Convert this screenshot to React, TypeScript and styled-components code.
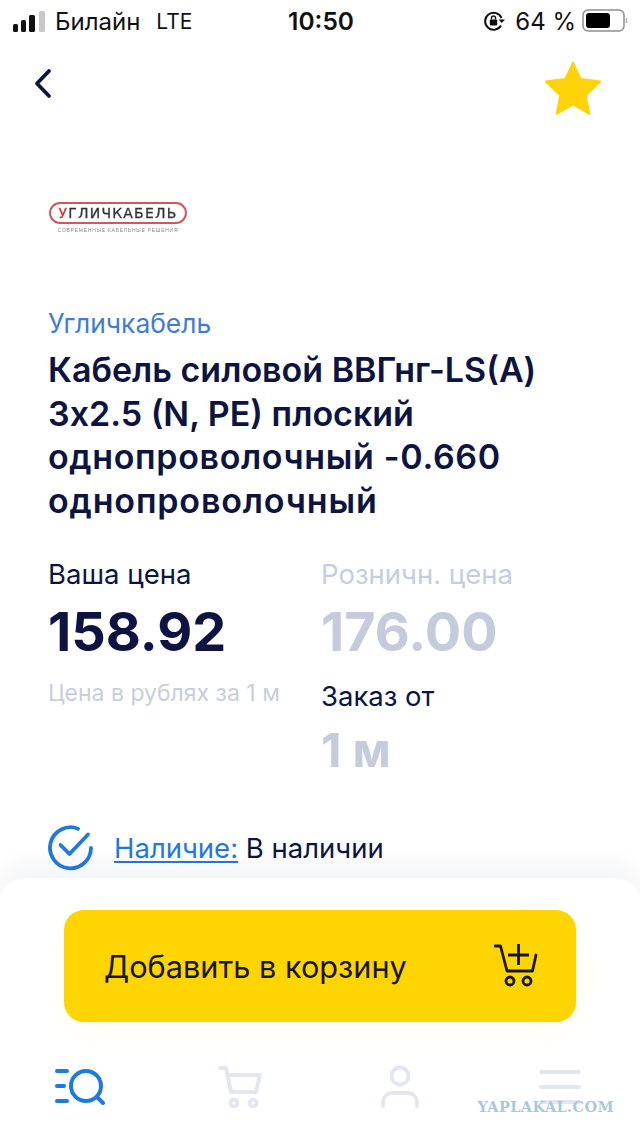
import styled, { createGlobalStyle } from "styled-components"

const Global = createGlobalStyle`
    html, body {
        margin: 0;
        padding: 0;
        background: #fff;
    }
`
const Page = styled.div`
    position: relative;
    width: 640px;
    height: 1136px;
    overflow: hidden;
    display: flex;
    flex-direction: column;
    background: #fff;
    color: #0e1442;
    font-family: "Inter", "Roboto", sans-serif;
`
const StatusBar = styled.div`
    height: 42px;
    flex: none;
    padding: 0 11px 0 13px;
    display: grid;
    grid-template-columns: 1fr auto 1fr;
    align-items: center;
    color: #111;
    font-family: "Inter", sans-serif;
    font-size: 24px;
`
const StatusLeft = styled.div`
    display: flex;
    align-items: center;
    gap: 8px;
`
const StatusRight = styled.div`
    display: flex;
    align-items: center;
    justify-content: flex-end;
    gap: 10px;
`
const Percent = styled.span`
    margin-right: -4px;
`
const Clock = styled.div`
    font-weight: 600;
    font-size: 24.500px;
`
const Lte = styled.span`
    margin-left: 8px;
    font-size: 21px;
`
const Nav = styled.div`
    height: 82px;
    flex: none;
    padding: 0 38px 0 32px;
    display: flex;
    align-items: center;
    justify-content: space-between;
`
const StarBox = styled.div`
    margin-top: 8px;
    display: flex;
`
const LogoWrap = styled.div`
    margin: 78px 0 0 49px;
    width: 138px;
    display: flex;
    flex-direction: column;
    align-items: center;
    gap: 3px;
    filter: blur(0.35px);
`
const LogoPill = styled.div`
    box-sizing: border-box;
    width: 138px;
    height: 22px;
    border: 2px solid #d0585c;
    border-radius: 11px;
    display: flex;
    align-items: center;
    justify-content: center;
    font-family: "DejaVu Sans", sans-serif;
    font-size: 14px;
    font-weight: 400;
    letter-spacing: 1.200px;
    -webkit-text-stroke: 0.3px #33343a;
    color: #33343a;
    white-space: nowrap;
    span {
        color: #d0353a;
        -webkit-text-stroke: 0.3px #d0353a;
    }
`
const LogoTag = styled.div`
    font-family: "Liberation Sans", sans-serif;
    font-size: 5px;
    letter-spacing: 0.750px;
    color: #8a8a90;
    white-space: nowrap;
`
const Info = styled.div`
    padding: 0 48px;
    margin-top: 75px;
`
const Brand = styled.div`
    color: #3f7cd8;
    font-size: 26.400px;
    line-height: 30px;
`
const Title = styled.h1`
    margin: 10px 0 0;
    font-size: 34px;
    font-weight: 600;
    line-height: 43.500px;
    color: #0e1442;
    white-space: nowrap;
`
const TitleLine = styled.span<{ $spread?: string }>`
    display: block;
    letter-spacing: ${(p) => p.$spread ?? "0"};
`
const Prices = styled.div`
    margin-top: 36px;
    display: grid;
    grid-template-columns: 273px 1fr;
`
const PriceCol = styled.div`
    display: flex;
    flex-direction: column;
`
const Label = styled.div<{ $muted?: boolean }>`
    font-size: 27.500px;
    line-height: 32px;
    white-space: nowrap;
    color: ${(p) => (p.$muted ? "#c6cede" : "#0e1442")};
`
const Value = styled.div<{ $muted?: boolean; $small?: boolean }>`
    margin-top: ${(p) => (p.$small ? "8px" : "8px")};
    font-size: ${(p) => (p.$small ? "47px" : "54px")};
    font-weight: 700;
    line-height: ${(p) => (p.$small ? "60px" : "68px")};
    color: ${(p) => (p.$muted ? "#c3cbdd" : "#0e1442")};
`
const Note = styled.div`
    margin-top: 13px;
    font-size: 23px;
    line-height: 28px;
    color: #c6cede;
    white-space: nowrap;
`
const SecondLabel = styled(Label)`
    margin-top: 14px;
`
const Stock = styled.div`
    margin-top: 45px;
    display: flex;
    align-items: center;
    gap: 20px;
    font-size: 27.500px;
    line-height: 44px;
`
const StockLink = styled.a`
    color: #1f7ae0;
    text-decoration: underline;
    text-underline-offset: 3px;
    text-decoration-thickness: 2px;
`
const Bottom = styled.div`
    margin-top: auto;
    height: 258px;
    box-sizing: border-box;
    flex: none;
    background: #fff;
    border-radius: 24px 24px 0 0;
    box-shadow: 0 -14px 24px rgba(20, 30, 70, 0.05);
    padding: 32px 64px 0;
    display: flex;
    flex-direction: column;
`
const AddButton = styled.button`
    height: 112px;
    flex: none;
    padding: 0 38px 0 40px;
    border: 0;
    border-radius: 20px;
    background: #ffd500;
    display: flex;
    align-items: center;
    justify-content: space-between;
    font-family: "Inter", sans-serif;
    font-size: 30.700px;
    color: #16161c;
    box-shadow: 0 10px 30px rgba(255, 213, 0, 0.06);
`
const Tabs = styled.div`
    margin: 44px -64px 0;
    display: grid;
    grid-template-columns: repeat(4, 160px);
    justify-items: center;
    align-items: center;
`
const Watermark = styled.div`
    position: absolute;
    right: 26px;
    bottom: 21px;
    font-family: "DejaVu Serif", serif;
    font-weight: 700;
    font-size: 14.500px;
    color: #a9c8dc;
    letter-spacing: 0.4px;
`

function Signal() {
    return (
        <svg width="34" height="21" viewBox="0 0 34 21">
            <rect x="0" y="13" width="5" height="8" rx="1.500" fill="#111" />
            <rect x="8" y="9" width="5" height="12" rx="1.500" fill="#111" />
            <rect x="16" y="4" width="6" height="17" rx="1.500" fill="#111" />
            <rect x="26" y="0" width="6" height="21" rx="1.500" fill="#c9c9c9" />
        </svg>
    )
}

function Rotation() {
    return (
        <svg width="22" height="22" viewBox="0 0 22 22" fill="none">
            <path d="M18.500 8A8.500 8.500 0 1 0 18 15.500" stroke="#111" strokeWidth="2" />
            <path d="M15.500 9.500h6.500l-3.200 3.600z" fill="#111" />
            <rect x="6.800" y="9.500" width="7.400" height="6" rx="1" fill="#111" />
            <path d="M8.500 9.500V8a2 2 0 0 1 4 0v1.500" stroke="#111" strokeWidth="1.400" />
        </svg>
    )
}

function Battery() {
    return (
        <svg width="47" height="24" viewBox="0 0 47 24" fill="none">
            <rect x="1" y="1" width="41" height="21" rx="5" stroke="#8f8f8f" strokeWidth="1.500" />
            <rect x="4" y="4" width="24" height="15" rx="3" fill="#000" />
            <path d="M44.500 9v5" stroke="#b5b5b5" strokeWidth="1.600" />
        </svg>
    )
}

function Back() {
    return (
        <svg width="24" height="32" viewBox="0 0 24 32" fill="none">
            <path d="M17 4L5 16.500 17 29" stroke="#0e1442" strokeWidth="3.800" strokeLinecap="round" strokeLinejoin="round" />
        </svg>
    )
}

function Star() {
    return (
        <svg width="58" height="56" viewBox="0 0 58 56">
            <path
                d="M29 1.500l8.300 17.600 19 2.400a1 1 0 0 1 .5 1.700L42.800 36.700l3.600 18a1 1 0 0 1-1.500 1L29 46.600l-15.900 9.100a1 1 0 0 1-1.500-1l3.600-18L1.200 23.200a1 1 0 0 1 .5-1.700l19-2.400z"
                fill="#ffd20a"
            />
        </svg>
    )
}

function Check() {
    return (
        <svg width="46" height="46" viewBox="0 0 46 46" fill="none">
            <path d="M43 23A20.500 20.500 0 1 1 30 3.700" stroke="#1f7ae0" strokeWidth="3.800" strokeLinecap="round" />
            <path d="M12.500 20l9 9L40 9.500" stroke="#1f7ae0" strokeWidth="3.800" strokeLinecap="round" strokeLinejoin="round" />
        </svg>
    )
}

function CartPlus() {
    return (
        <svg width="44" height="44" viewBox="0 0 44 44" fill="none" stroke="#16161c" strokeWidth="2.800">
            <path d="M1 2h5.500L13 27h25.500L42 11" strokeLinecap="round" strokeLinejoin="round" />
            <path d="M24.500 0v21M14 11h21" />
            <circle cx="16" cy="37" r="4" />
            <circle cx="33" cy="37" r="4" />
        </svg>
    )
}

function SearchTab() {
    return (
        <svg width="50" height="36" viewBox="0 0 50 36" fill="none" stroke="#1f7ae0" strokeWidth="4" strokeLinecap="round">
            <path d="M2 2h10M2 17h7M2 32h10" />
            <circle cx="31" cy="17" r="15" />
            <path d="M42 28l6 6" />
        </svg>
    )
}

function CartTab() {
    return (
        <svg width="44" height="42" viewBox="0 0 44 42" fill="none" stroke="#e3e6ef" strokeWidth="3.800" strokeLinecap="round" strokeLinejoin="round">
            <path d="M2 2h6l5 24h25l4-17H9" />
            <circle cx="16" cy="37" r="3.500" />
            <circle cx="35" cy="37" r="3.500" />
        </svg>
    )
}

function UserTab() {
    return (
        <svg width="38" height="42" viewBox="0 0 38 42" fill="none" stroke="#e3e6ef" strokeWidth="3.800" strokeLinecap="round">
            <circle cx="19" cy="10" r="8.500" />
            <path d="M2 40v-3c0-6 4-10 10-10h14c6 0 10 4 10 10v3" />
        </svg>
    )
}

function MenuTab() {
    return (
        <svg width="42" height="34" viewBox="0 0 42 34" fill="none" stroke="#e3e6ef" strokeWidth="3.800" strokeLinecap="round">
            <path d="M2 2h38M2 17h38M2 32h38" />
        </svg>
    )
}

export default function App() {
    return (
        <Page>
            <Global />
            <StatusBar>
                <StatusLeft>
                    <Signal />
                    <span>Билайн</span>
                    <Lte>LTE</Lte>
                </StatusLeft>
                <Clock>10:50</Clock>
                <StatusRight>
                    <Rotation />
                    <Percent>64 %</Percent>
                    <Battery />
                </StatusRight>
            </StatusBar>
            <Nav>
                <Back />
                <StarBox><Star /></StarBox>
            </Nav>
            <LogoWrap>
                <LogoPill><span>У</span>ГЛИЧКАБЕЛЬ</LogoPill>
                <LogoTag>СОВРЕМЕННЫЕ КАБЕЛЬНЫЕ РЕШЕНИЯ</LogoTag>
            </LogoWrap>
            <Info>
                <Brand>Угличкабель</Brand>
                <Title>
                    <TitleLine>Кабель силовой ВВГнг-LS(А)</TitleLine>
                    <TitleLine>3х2.5 (N, РЕ) плоский</TitleLine>
                    <TitleLine $spread="0.650px">однопроволочный -0.660</TitleLine>
                    <TitleLine $spread="0.850px">однопроволочный</TitleLine>
                </Title>
                <Prices>
                    <PriceCol>
                        <Label>Ваша цена</Label>
                        <Value>158.92</Value>
                        <Note>Цена в рублях за 1 м</Note>
                    </PriceCol>
                    <PriceCol>
                        <Label $muted>Розничн. цена</Label>
                        <Value $muted>176.00</Value>
                        <SecondLabel>Заказ от</SecondLabel>
                        <Value $muted $small>1 м</Value>
                    </PriceCol>
                </Prices>
                <Stock>
                    <Check />
                    <div><StockLink>Наличие:</StockLink> В наличии</div>
                </Stock>
            </Info>
            <Bottom>
                <AddButton>
                    Добавить в корзину
                    <CartPlus />
                </AddButton>
                <Tabs>
                    <SearchTab />
                    <CartTab />
                    <UserTab />
                    <MenuTab />
                </Tabs>
            </Bottom>
            <Watermark>YAPLAKAL.COM</Watermark>
        </Page>
    )
}
